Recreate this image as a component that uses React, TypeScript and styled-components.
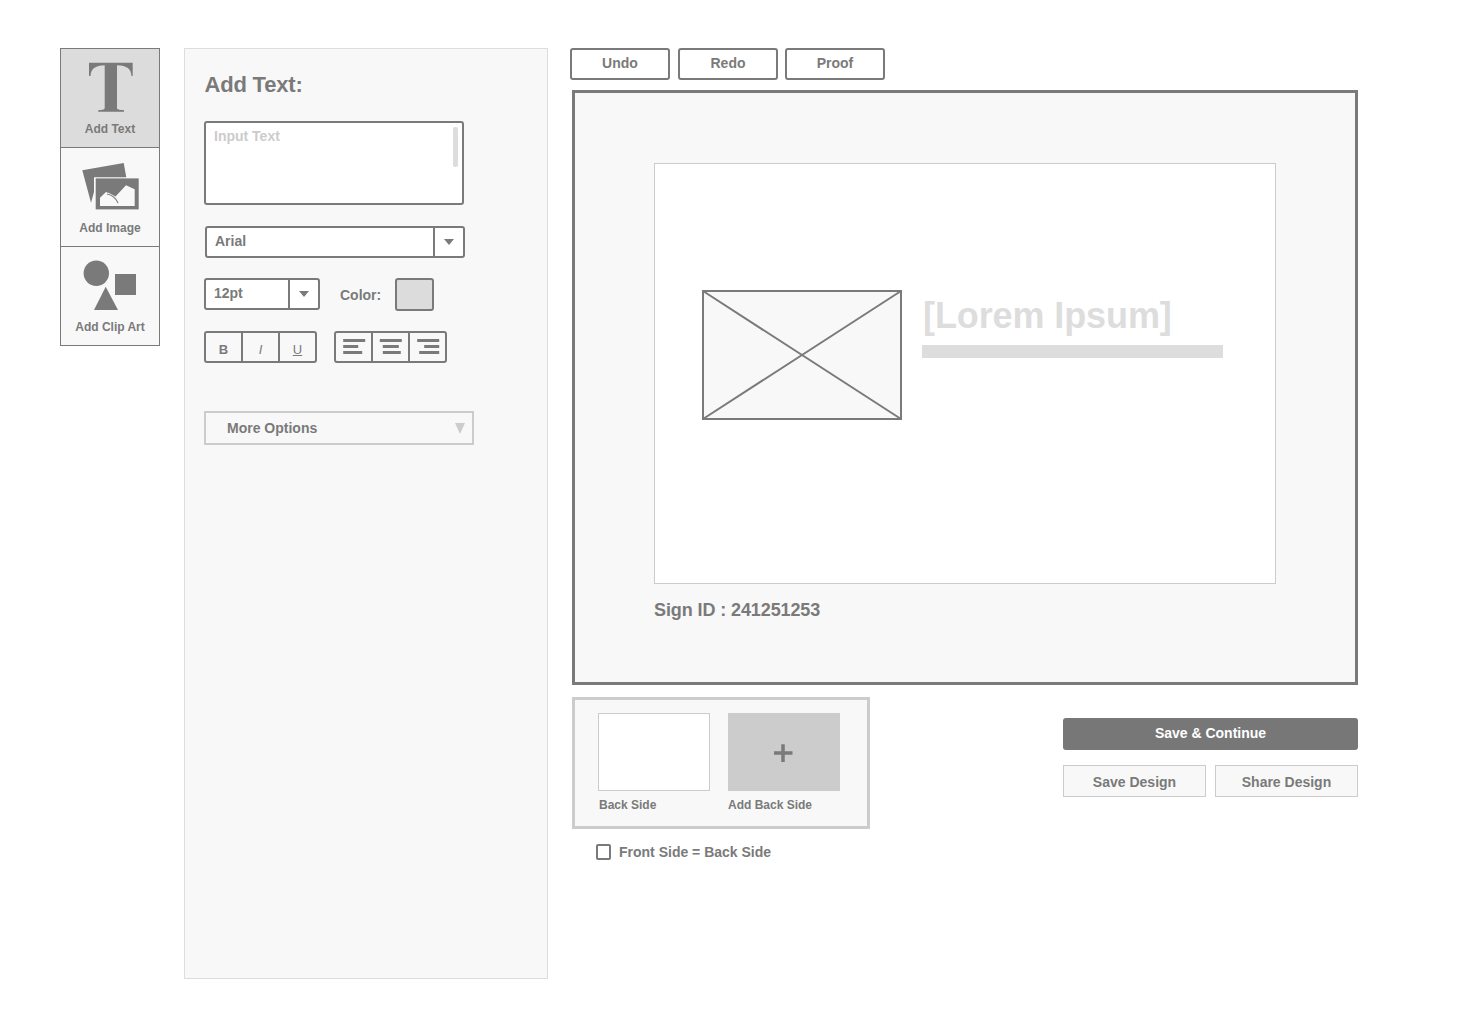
import React from "react";
import styled, { createGlobalStyle } from "styled-components";

const Global = createGlobalStyle`
  html, body {
    margin: 0;
    padding: 0;
    background: #fff;
  }
  * {
    box-sizing: border-box;
  }
  body {
    font-family: "Liberation Sans", Arial, sans-serif;
    font-weight: 700;
    color: #7a7a7a;
  }
`;

const Page = styled.div`
  width: 1460px;
  height: 1012px;
  padding: 48px 0 0 60px;
  display: flex;
  align-items: flex-start;
`;

/* left tool column */
const ToolColumn = styled.div`
  width: 100px;
  height: 298px;
  border: 1px solid #7a7a7a;
  display: flex;
  flex-direction: column;
  margin-right: 24px;
`;

const Tool = styled.div<{ $active?: boolean }>`
  height: 99px;
  flex: none;
  background: ${(p) => (p.$active ? "#dcdcdc" : "#f8f8f8")};
  border-bottom: 1px solid #7a7a7a;
  display: flex;
  flex-direction: column;
  align-items: center;
  padding-top: 5px;
  &:last-child {
    border-bottom: 0;
    height: 98px;
  }
`;

const ToolIcon = styled.svg`
  width: 98px;
  height: 68px;
  flex: none;
`;

const ToolLabel = styled.div`
  font-size: 12px;
  line-height: 14px;
`;

/* options panel */
const Panel = styled.div`
  width: 364px;
  height: 931px;
  background: #f8f8f8;
  border: 1px solid #ddd;
  padding: 23px 0 0 19px;
  margin-right: 22px;
  flex: none;
`;

const Title = styled.div`
  font-size: 22px;
  line-height: 26px;
  margin-left: 0.5px;
  letter-spacing: -0.2px;
`;

const TextBox = styled.div`
  width: 260px;
  height: 84px;
  margin-top: 23px;
  background: #fff;
  border: 2px solid #7a7a7a;
  border-radius: 3px;
  position: relative;
  padding: 5px 8px;
  font-size: 14px;
  line-height: 16px;
  color: #ccc;
`;

const ScrollThumb = styled.div`
  position: absolute;
  right: 4px;
  top: 4px;
  width: 5px;
  height: 40px;
  border-radius: 2px;
  background: #ddd;
`;

const Select = styled.div<{ $w: number; $ml?: number }>`
  width: ${(p) => p.$w}px;
  height: 32px;
  margin-left: ${(p) => p.$ml ?? 0}px;
  background: #fff;
  border: 2px solid #7a7a7a;
  border-radius: 3px;
  display: flex;
  align-items: center;
  font-size: 14px;
`;

const SelectValue = styled.div`
  flex: 1;
  padding-left: 8px;
  margin-top: -2px;
`;

const SelectArrow = styled.div`
  width: 30px;
  height: 100%;
  border-left: 2px solid #7a7a7a;
  display: flex;
  align-items: center;
  justify-content: center;
  &::after {
    content: "";
    border-left: 5px solid transparent;
    border-right: 5px solid transparent;
    border-top: 6px solid #7a7a7a;
  }
`;

const FontRow = styled.div`
  margin-top: 21px;
`;

const SizeRow = styled.div`
  margin-top: 20px;
  display: flex;
  align-items: flex-start;
`;

const ColorLabel = styled.div`
  font-size: 14px;
  line-height: 16px;
  margin: 9px 14px 0 20px;
`;

const Swatch = styled.div`
  width: 39px;
  height: 33px;
  background: #dcdcdc;
  border: 2px solid #7a7a7a;
  border-radius: 3px;
`;

const FormatRow = styled.div`
  margin-top: 20px;
  display: flex;
  gap: 17px;
`;

const BtnGroup = styled.div`
  height: 32px;
  border: 2px solid #7a7a7a;
  border-radius: 3px;
  display: flex;
  background: #f8f8f8;
`;

const GroupBtn = styled.div<{ $italic?: boolean; $under?: boolean }>`
  width: 37px;
  display: flex;
  align-items: center;
  justify-content: center;
  font-size: 13px;
  padding-top: 4px;
  font-weight: ${(p) => (p.$italic || p.$under ? 400 : 700)};
  font-style: ${(p) => (p.$italic ? "italic" : "normal")};
  text-decoration: ${(p) => (p.$under ? "underline" : "none")};
  border-left: 2px solid #7a7a7a;
  &:first-child {
    border-left: 0;
    width: 35px;
  }
`;

const AlignIcon = styled.svg`
  width: 26px;
  height: 20px;
  flex: none;
`;

const MoreOptions = styled.div`
  width: 270px;
  height: 34px;
  margin-top: 48px;
  border: 2px solid #ccc;
  display: flex;
  align-items: center;
  justify-content: space-between;
  padding: 0 7px 0 21px;
  font-size: 14px;
  &::after {
    content: "";
    margin-top: 1px;
    border-left: 5.5px solid transparent;
    border-right: 5.5px solid transparent;
    border-top: 11px solid #ccc;
  }
`;

/* main column */
const Main = styled.div`
  width: 790px;
  flex: none;
`;

const Toolbar = styled.div`
  display: flex;
  height: 32px;
`;

const ToolbarBtn = styled.div<{ $ml: number }>`
  width: 100px;
  height: 32px;
  margin-left: ${(p) => p.$ml}px;
  border: 2px solid #7a7a7a;
  border-radius: 3px;
  display: flex;
  align-items: center;
  justify-content: center;
  font-size: 14px;
  padding-bottom: 2px;
`;

const Canvas = styled.div`
  width: 786px;
  height: 595px;
  margin: 10px 0 0 2px;
  background: #f8f8f8;
  border: 3px solid #7a7a7a;
  padding: 70px 0 0 79px;
`;

const Sheet = styled.div`
  width: 622px;
  height: 421px;
  background: #fff;
  border: 1px solid #ccc;
  padding: 126px 0 0 47px;
  display: flex;
  align-items: flex-start;
`;

const Placeholder = styled.svg`
  width: 200px;
  height: 130px;
  flex: none;
`;

const Copy = styled.div`
  margin-left: 20px;
  padding-top: 4px;
`;

const Headline = styled.div`
  font-size: 36px;
  line-height: 44px;
  color: #ddd;
  margin-left: 1px;
  letter-spacing: -0.1px;
`;

const HeadlineBar = styled.div`
  width: 301px;
  height: 13px;
  margin-top: 7px;
  background: #ddd;
`;

const SignId = styled.div`
  font-size: 18px;
  line-height: 20px;
  margin-top: 16px;
  letter-spacing: -0.1px;
`;

const Bottom = styled.div`
  display: flex;
  justify-content: space-between;
  margin: 12px 0 0 2px;
  width: 786px;
`;

const SideBox = styled.div`
  width: 298px;
  height: 132px;
  background: #f8f8f8;
  border: 3px solid #ccc;
  padding: 13px 0 0 23px;
  display: flex;
  gap: 18px;
`;

const SideThumb = styled.div`
  width: 112px;
`;

const Thumb = styled.div<{ $add?: boolean }>`
  height: 78px;
  background: ${(p) => (p.$add ? "#ccc" : "#fff")};
  border: 1px solid #ccc;
  display: flex;
  align-items: center;
  justify-content: center;
`;

const ThumbLabel = styled.div<{ $nudge?: boolean }>`
  font-size: 12px;
  line-height: 14px;
  margin-top: 7px;
  margin-left: ${(p) => (p.$nudge ? 1 : 0)}px;
`;

const Actions = styled.div`
  width: 295px;
  margin-top: 21px;
`;

const PrimaryBtn = styled.div`
  height: 32px;
  background: #777;
  border-radius: 3px;
  color: #fff;
  font-size: 14px;
  display: flex;
  align-items: center;
  justify-content: center;
  padding-bottom: 2px;
`;

const SecondaryRow = styled.div`
  display: flex;
  justify-content: space-between;
  margin-top: 15px;
`;

const SecondaryBtn = styled.div`
  width: 143px;
  height: 32px;
  background: #f8f8f8;
  border: 1px solid #ccc;
  display: flex;
  align-items: center;
  justify-content: center;
  font-size: 14px;
  padding-top: 2px;
`;

const CheckRow = styled.div`
  display: flex;
  align-items: center;
  margin: 15px 0 0 24px;
  font-size: 14px;
  line-height: 16px;
`;

const CheckBox = styled.div`
  width: 15px;
  height: 16px;
  border: 2px solid #7a7a7a;
  border-radius: 2px;
  margin-right: 8px;
  background: #fff;
`;

const LeftLines = [
  [2.2, 22],
  [2.2, 15],
  [2.2, 19],
];
const CenterLines = [
  [1.8, 22],
  [4.8, 16],
  [4.8, 18],
];
const RightLines = [
  [2.2, 22],
  [9.2, 15],
  [4.2, 20],
];

const Align = ({ lines }: { lines: number[][] }) => (
  <AlignIcon viewBox="0 0 26 20">
    {lines.map(([x, w], i) => (
      <rect key={i} x={x} y={i * 6} width={w} height={3} fill="#7a7a7a" />
    ))}
  </AlignIcon>
);

export default function App() {
  return (
    <Page>
      <Global />
      <ToolColumn>
        <Tool $active>
          <ToolIcon viewBox="0 0 98 68">
            <path
              fill="#7a7a7a"
              d="M28 8.7H71.7V22H70.5C70 15 66 11.5 56 11.3V54C56 55.5 58 56 63 56.2V57.7H37.3V56.2C42 56 43.7 55.5 43.7 54V11.3C34 11.5 30 15 29.5 22H28Z"
            />
          </ToolIcon>
          <ToolLabel>Add Text</ToolLabel>
        </Tool>
        <Tool>
          <ToolIcon viewBox="0 0 98 68">
            <path fill="#7a7a7a" d="M21.3 17.3L62.7 10L65.3 24.2H33V39L30 49.7Z" />
            <rect x="34.7" y="25.4" width="43" height="31" fill="#7a7a7a" />
            <path fill="#f8f8f8" d="M39 53V44.7L45 39L49 40.5L54.5 43.5L65 32.3L73.7 36.3V53Z" />
            <path fill="none" stroke="#7a7a7a" strokeWidth="1.2" d="M46 41C51 42 55 45 57 50" />
          </ToolIcon>
          <ToolLabel>Add Image</ToolLabel>
        </Tool>
        <Tool>
          <ToolIcon viewBox="0 0 98 68">
            <circle cx="35.3" cy="21.3" r="12.7" fill="#7a7a7a" />
            <rect x="54" y="22" width="21" height="21" fill="#7a7a7a" />
            <path fill="#7a7a7a" d="M44.7 34.7L57 58H33Z" />
          </ToolIcon>
          <ToolLabel>Add Clip Art</ToolLabel>
        </Tool>
      </ToolColumn>

      <Panel>
        <Title>Add Text:</Title>
        <TextBox>
          Input Text
          <ScrollThumb />
        </TextBox>
        <FontRow>
          <Select $w={260} $ml={1}>
            <SelectValue>Arial</SelectValue>
            <SelectArrow />
          </Select>
        </FontRow>
        <SizeRow>
          <Select $w={116}>
            <SelectValue>12pt</SelectValue>
            <SelectArrow />
          </Select>
          <ColorLabel>Color:</ColorLabel>
          <Swatch />
        </SizeRow>
        <FormatRow>
          <BtnGroup>
            <GroupBtn>B</GroupBtn>
            <GroupBtn $italic>I</GroupBtn>
            <GroupBtn $under>U</GroupBtn>
          </BtnGroup>
          <BtnGroup>
            <GroupBtn><Align lines={LeftLines} /></GroupBtn>
            <GroupBtn><Align lines={CenterLines} /></GroupBtn>
            <GroupBtn><Align lines={RightLines} /></GroupBtn>
          </BtnGroup>
        </FormatRow>
        <MoreOptions>More Options</MoreOptions>
      </Panel>

      <Main>
        <Toolbar>
          <ToolbarBtn $ml={0}>Undo</ToolbarBtn>
          <ToolbarBtn $ml={8}>Redo</ToolbarBtn>
          <ToolbarBtn $ml={7}>Proof</ToolbarBtn>
        </Toolbar>
        <Canvas>
          <Sheet>
            <Placeholder viewBox="0 0 200 130">
              <rect x="1" y="1" width="198" height="128" fill="#f8f8f8" stroke="#7a7a7a" strokeWidth="2" />
              <path d="M1 1L199 129M199 1L1 129" stroke="#7a7a7a" strokeWidth="2" fill="none" />
            </Placeholder>
            <Copy>
              <Headline>[Lorem Ipsum]</Headline>
              <HeadlineBar />
            </Copy>
          </Sheet>
          <SignId>Sign ID : 241251253</SignId>
        </Canvas>
        <Bottom>
          <div>
            <SideBox>
              <SideThumb>
                <Thumb />
                <ThumbLabel $nudge>Back Side</ThumbLabel>
              </SideThumb>
              <SideThumb>
                <Thumb $add>
                  <svg width="20" height="20" viewBox="0 0 20 20">
                    <path d="M0 11h18.5M9 2.2v18" stroke="#7a7a7a" strokeWidth="3.5" />
                  </svg>
                </Thumb>
                <ThumbLabel>Add Back Side</ThumbLabel>
              </SideThumb>
            </SideBox>
            <CheckRow>
              <CheckBox />
              Front Side = Back Side
            </CheckRow>
          </div>
          <Actions>
            <PrimaryBtn>Save &amp; Continue</PrimaryBtn>
            <SecondaryRow>
              <SecondaryBtn>Save Design</SecondaryBtn>
              <SecondaryBtn>Share Design</SecondaryBtn>
            </SecondaryRow>
          </Actions>
        </Bottom>
      </Main>
    </Page>
  );
}
